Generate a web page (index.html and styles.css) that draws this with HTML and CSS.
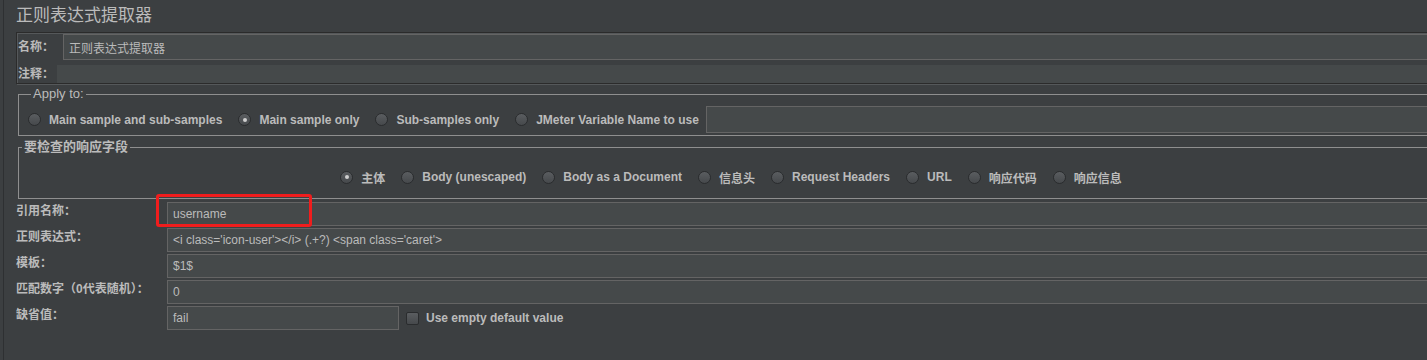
FILE: index.html
```html
<!DOCTYPE html>
<html lang="zh-CN">
<head>
    <meta charset="UTF-8">
    <title>正则表达式提取器</title>
    <link rel="stylesheet" href="styles.css">
</head>
<body>

<div class="page">
    <h1 class="title">正则表达式提取器</h1>

    <!-- Name / comment -->
    <div class="name-panel">
        <div class="name-row">
            <span class="lbl">名称：</span>
            <div class="field">正则表达式提取器</div>
        </div>
        <div class="comment-row">
            <span class="lbl">注释：</span>
            <div class="field field-plain"></div>
        </div>
    </div>

    <!-- Apply to -->
    <fieldset class="group apply-group">
        <legend>Apply to:</legend>
        <div class="radios">
            <span class="radio"><i class="dot"></i>Main sample and sub-samples</span>
            <span class="radio"><i class="dot on"></i>Main sample only</span>
            <span class="radio"><i class="dot"></i>Sub-samples only</span>
            <span class="radio"><i class="dot"></i>JMeter Variable Name to use</span>
            <div class="field var-field"></div>
        </div>
    </fieldset>

    <!-- Field to check -->
    <fieldset class="group check-group">
        <legend>要检查的响应字段</legend>
        <div class="radios centered">
            <span class="radio"><i class="dot on"></i>主体</span>
            <span class="radio"><i class="dot"></i>Body (unescaped)</span>
            <span class="radio"><i class="dot"></i>Body as a Document</span>
            <span class="radio"><i class="dot"></i>信息头</span>
            <span class="radio"><i class="dot"></i>Request Headers</span>
            <span class="radio"><i class="dot"></i>URL</span>
            <span class="radio"><i class="dot"></i>响应代码</span>
            <span class="radio"><i class="dot"></i>响应信息</span>
        </div>
    </fieldset>

    <!-- Extractor settings -->
    <div class="form-grid">
        <span class="lbl">引用名称：</span>
        <div class="field">username<span class="mark"></span></div>

        <span class="lbl">正则表达式：</span>
        <div class="field">&lt;i class='icon-user'&gt;&lt;/i&gt; (.+?) &lt;span class='caret'&gt;</div>

        <span class="lbl">模板：</span>
        <div class="field">$1$</div>

        <span class="lbl">匹配数字（0代表随机）：</span>
        <div class="field">0</div>

        <span class="lbl">缺省值：</span>
        <div class="default-row">
            <div class="field short">fail</div>
            <span class="check"><i class="box"></i>Use empty default value</span>
        </div>
    </div>
</div>

</body>
</html>
```

FILE: styles.css
```css
/* Global */
* {
    margin: 0;
    padding: 0;
    box-sizing: border-box;
}

html, body {
    height: 100%;
    overflow: hidden;
}

body {
    background-color: #3c3f41;
    color: #bbbbbb;
    font-family: "Liberation Sans", "Noto Sans CJK SC", sans-serif;
    font-size: 12px;
}

/* Page runs a bit past the window on the right, like the Swing panel */
.page {
    width: 1441px;
    min-height: 100%;
    margin-left: 3px;
    border-left: 1px solid #2e3032;
    padding: 6px 0 0 12px;
}

.title {
    font-size: 17px;
    font-weight: normal;
    line-height: 20px;
    margin-bottom: 6px;
}

.lbl {
    flex: none;
    font-weight: bold;
    line-height: 16px;
    white-space: nowrap;
}

/* Text fields */
.field {
    position: relative;
    flex: 1;
    display: flex;
    align-items: center;
    height: 100%;
    padding-left: 5px;
    background-color: #45494a;
    border: 1px solid #646464;
    white-space: nowrap;
}

.field-plain {
    border: none;
}

/* Name panel */
.name-panel {
    border: 1px solid #2b2b2b;
    box-shadow: inset 1px 1px 0 #55585a, 1px 1px 0 #55585a;
    padding: 1px 0 0 1px;
}

.name-row {
    display: flex;
    align-items: center;
    height: 26px;
}

.name-row .lbl {
    width: 45px;
}

.comment-row {
    display: flex;
    align-items: center;
    height: 18px;
    margin-top: 5px;
}

.comment-row .lbl {
    width: 39px;
}

/* Titled groups */
.group {
    border: 1px solid #8f8f8f;
    margin-left: 2px;
}

.group legend {
    margin-left: 3px;
    padding: 0 2px;
    font-size: 13px;
    line-height: 14px;
}

.check-group legend {
    font-weight: bold;
}

.apply-group {
    margin-top: 3px;
    padding: 5px 0 2px 9px;
}

.check-group {
    margin-top: 4px;
    padding: 15px 0 13px;
}

.radios {
    display: flex;
    align-items: center;
    gap: 16px;
}

.apply-group .radios {
    height: 27px;
}

.radios.centered {
    justify-content: center;
    height: 16px;
}

.radio {
    display: inline-flex;
    align-items: center;
    gap: 8px;
    font-weight: bold;
    white-space: nowrap;
}

.dot {
    display: flex;
    align-items: center;
    justify-content: center;
    width: 13px;
    height: 13px;
    border-radius: 50%;
    border: 1px solid #2a2c2e;
    background: linear-gradient(#5a5d60, #46494c);
}

.dot.on::after {
    content: "";
    width: 4px;
    height: 4px;
    border-radius: 50%;
    background-color: #cfcfcf;
}

.var-field {
    height: 27px;
    margin-left: -9px;
}

/* Extractor settings */
.form-grid {
    display: grid;
    grid-template-columns: 151px 1fr;
    grid-auto-rows: 24px;
    row-gap: 2px;
    margin-top: 3px;
}

.form-grid .lbl {
    padding-top: 1px;
}

.default-row {
    display: flex;
    align-items: center;
}

.field.short {
    flex: none;
    width: 232px;
}

.check {
    display: flex;
    align-items: center;
    gap: 7px;
    margin-left: 7px;
    font-weight: bold;
}

.box {
    width: 13px;
    height: 13px;
    border: 1px solid #2a2c2e;
    border-radius: 2px;
    background: linear-gradient(#5a5d60, #46494c);
}

/* Red annotation round the reference name */
.mark {
    position: absolute;
    left: -12px;
    top: -9px;
    width: 156px;
    height: 33px;
    border: 3px solid #f01d1d;
    border-radius: 3px;
}
```
